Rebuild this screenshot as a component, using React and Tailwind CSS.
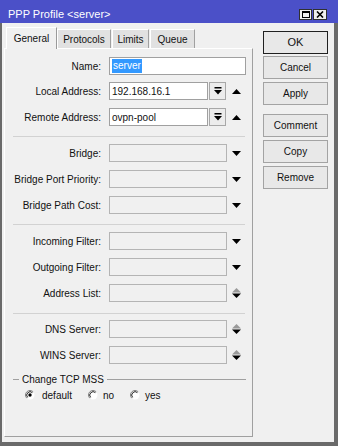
import React from 'react';

function DownArrow() {
  return (
    <svg width="9" height="5" viewBox="0 0 9 5">
      <path d="M0 0h9L4.5 5z" fill="#000" />
    </svg>
  );
}

function UpArrow() {
  return (
    <svg width="9" height="5" viewBox="0 0 9 5">
      <path d="M0 5h9L4.5 0z" fill="#000" />
    </svg>
  );
}

function Spinner() {
  return (
    <svg width="9" height="10" viewBox="0 0 9 10">
      <path d="M0 4.5h9L4.5 0z" fill="#9a9a9a" />
      <path d="M0 5.5h9L4.5 10z" fill="#000" />
    </svg>
  );
}

function DropBtn() {
  return (
    <div className="ml-[1px] w-[17px] h-full border border-[#a8a8a8] bg-[#ececec] flex items-center justify-center">
      <svg width="8" height="8" viewBox="0 0 8 8">
        <rect x="0.5" y="0" width="7" height="1.5" fill="#000" />
        <path d="M0 3h8L4 7.5z" fill="#000" />
      </svg>
    </div>
  );
}

function Radio({ checked }) {
  return (
    <svg width="10" height="10" viewBox="0 0 10 10">
      <circle cx="5" cy="5" r="4.5" fill="#fff" />
      <path d="M1.8 8.2A4.5 4.5 0 0 1 8.2 1.8" fill="none" stroke="#808080" strokeWidth="1" />
      <path d="M2.6 7.4A3.4 3.4 0 0 1 7.4 2.6" fill="none" stroke="#222" strokeWidth="1" />
      {checked && <circle cx="5" cy="5" r="1.7" fill="#000" />}
    </svg>
  );
}

function Row({ label, children, className = '' }) {
  return (
    <div className={`flex items-center h-[18px] ${className}`}>
      <div className="w-[96px] text-right whitespace-nowrap text-[#111]">{label}</div>
      <div className="ml-[8px] w-[137px] h-full flex items-center">{children}</div>
    </div>
  );
}

function Box({ w, white, children }) {
  return (
    <div
      className={`${w} h-full border flex items-center px-[2px] whitespace-nowrap ${
        white ? 'bg-white border-[#a0a0a0]' : 'bg-[#f0f0f0] border-[#b4b4b4]'
      }`}
    >
      {children}
    </div>
  );
}

function Sep({ className = '' }) {
  return <div className={`ml-[8px] w-[232px] h-px bg-[#d2d2d2] ${className}`} />;
}

function Btn({ children, def, className = '' }) {
  return (
    <div
      className={`w-[65px] h-[23px] flex items-center justify-center bg-[#e8e8e8] border ${
        def ? 'border-[#202020]' : 'border-[#a3a3a3]'
      } ${className}`}
    >
      <span className={def ? 'text-[11px]' : ''}>{children}</span>
    </div>
  );
}

export default function App() {
  return (
    <div className="w-[338px] h-[446px] flex flex-col bg-[#f0f0f0] text-[10px] text-[#111] font-['Liberation_Sans',Arial,sans-serif] overflow-hidden">
      {/* Title bar */}
      <div className="h-[23px] shrink-0 bg-[#4b50c8] flex items-center pt-[5px] pl-[8px] pr-[11px]">
        <span className="text-white text-[11px] flex-1">PPP Profile &lt;server&gt;</span>
        <div className="w-[13px] h-[11px] bg-[#f0f0f0] border border-[#303030] flex items-center justify-center">
          <div className="w-[8px] h-[7px] border border-t-2 border-black" />
        </div>
        <div className="ml-[1px] w-[14px] h-[11px] bg-[#f0f0f0] border border-[#303030] flex items-center justify-center">
          <svg width="8" height="7" viewBox="0 0 8 7">
            <path d="M1 0.5l6 6M7 0.5l-6 6" stroke="#000" strokeWidth="1.6" />
          </svg>
        </div>
      </div>

      {/* Body */}
      <div className="flex-1 flex border-l-2 border-r-4 border-b-4 border-[#6a6a6a] pl-[2px] pt-[3px] pb-[5px]">
        {/* Left: tabs + panel */}
        <div className="w-[249px] flex flex-col">
          <div className="h-[22px] flex items-end pl-[2px] relative z-10">
            <div className="w-[51px] h-[22px] flex items-center justify-center bg-[#f0f0f0] border-l border-t border-white border-r border-r-[#9a9a9a] -mb-px pb-px">
              General
            </div>
            <div className="w-[54px] h-[19px] flex items-center justify-center bg-[#e1e1e1] border-t border-l border-white border-r border-r-[#a0a0a0]">
              Protocols
            </div>
            <div className="ml-px w-[37px] h-[19px] flex items-center justify-center bg-[#e1e1e1] border-t border-l border-white border-r border-r-[#a0a0a0]">
              Limits
            </div>
            <div className="ml-px w-[45px] h-[19px] flex items-center justify-center bg-[#e1e1e1] border-t border-l border-white border-r border-r-[#a0a0a0]">
              Queue
            </div>
          </div>
          <div className="flex-1 border border-white border-r-[#a0a0a0] border-b-[#a0a0a0] flex flex-col pt-[8px]">
            <Row label="Name:">
              <Box w="w-full" white>
                <span className="bg-[#3399ff] text-white px-px leading-[14px]">server</span>
              </Box>
            </Row>
            <Row label="Local Address:" className="mt-[7px]">
              <Box w="w-[99px]" white>192.168.16.1</Box>
              <DropBtn />
              <div className="flex-1 flex justify-center"><UpArrow /></div>
            </Row>
            <Row label="Remote Address:" className="mt-[8px]">
              <Box w="w-[99px]" white>ovpn-pool</Box>
              <DropBtn />
              <div className="flex-1 flex justify-center"><UpArrow /></div>
            </Row>
            <Sep className="mt-[10px]" />
            <Row label="Bridge:" className="mt-[7px]">
              <Box w="w-[118px]" />
              <div className="flex-1 flex justify-center"><DownArrow /></div>
            </Row>
            <Row label="Bridge Port Priority:" className="mt-[8px]">
              <Box w="w-[118px]" />
              <div className="flex-1 flex justify-center"><DownArrow /></div>
            </Row>
            <Row label="Bridge Path Cost:" className="mt-[8px]">
              <Box w="w-[118px]" />
              <div className="flex-1 flex justify-center"><DownArrow /></div>
            </Row>
            <Sep className="mt-[10px]" />
            <Row label="Incoming Filter:" className="mt-[7px]">
              <Box w="w-[118px]" />
              <div className="flex-1 flex justify-center"><DownArrow /></div>
            </Row>
            <Row label="Outgoing Filter:" className="mt-[8px]">
              <Box w="w-[118px]" />
              <div className="flex-1 flex justify-center"><DownArrow /></div>
            </Row>
            <Row label="Address List:" className="mt-[8px]">
              <Box w="w-[118px]" />
              <div className="flex-1 flex justify-center"><Spinner /></div>
            </Row>
            <Sep className="mt-[11px]" />
            <Row label="DNS Server:" className="mt-[6px]">
              <Box w="w-[118px]" />
              <div className="flex-1 flex justify-center"><Spinner /></div>
            </Row>
            <Row label="WINS Server:" className="mt-[8px]">
              <Box w="w-[118px]" />
              <div className="flex-1 flex justify-center"><Spinner /></div>
            </Row>
            <div className="mt-[9px] h-[12px] ml-[8px] w-[233px] flex items-center">
              <div className="w-[6px] h-px bg-[#a0a0a0]" />
              <span className="px-[3px] whitespace-nowrap">Change TCP MSS</span>
              <div className="flex-1 h-px bg-[#a0a0a0]" />
            </div>
            <div className="mt-[4px] h-[12px] pl-[20px] flex items-center">
              <div className="w-[63px] flex items-center gap-[7px]">
                <Radio checked />
                <span>default</span>
              </div>
              <div className="w-[42px] flex items-center gap-[5px]">
                <Radio />
                <span>no</span>
              </div>
              <div className="flex items-center gap-[5px]">
                <Radio />
                <span>yes</span>
              </div>
            </div>
          </div>
        </div>

        {/* Right: buttons */}
        <div className="ml-[10px] pt-[5px] flex flex-col">
          <Btn def>OK</Btn>
          <Btn className="mt-[2px]">Cancel</Btn>
          <Btn className="mt-[3px]">Apply</Btn>
          <Btn className="mt-[9px]">Comment</Btn>
          <Btn className="mt-[3px]">Copy</Btn>
          <Btn className="mt-[3px]">Remove</Btn>
        </div>
      </div>
    </div>
  );
}
